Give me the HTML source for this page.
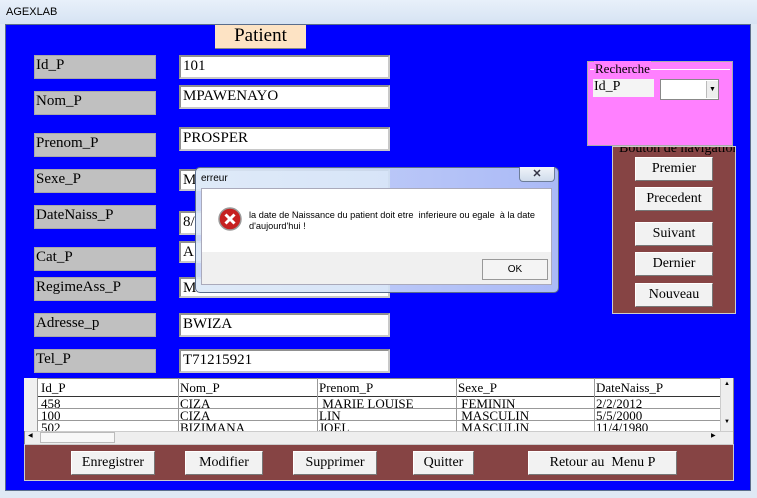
<!DOCTYPE html><html><head><style>
body{margin:0;width:757px;height:498px;overflow:hidden;background:#dfe9f5;font-family:"Liberation Serif",serif;position:relative}
.a{position:absolute;box-sizing:border-box}
.lab{background:#c0c0c0;border:1px solid #a8a8a8;font-size:15px;padding:0 0 0 1px;line-height:18px;width:122px;height:24px;left:34px}
.inp{background:#fff;border:2px solid #c8c8c8;border-top-color:#909090;border-left-color:#909090;font-size:15px;padding:0 2px;line-height:18px;width:211px;height:24px;left:179px}
.btn{background:#f2f2f2;border:1px solid #fff;border-right-color:#777;border-bottom-color:#777;font-size:14px;text-align:center;line-height:22px;height:24px}
.cell{position:absolute;font-size:13px;line-height:12px;overflow:hidden;white-space:nowrap}
</style></head><body>
<div class="a" style="left:0;top:0;width:757px;height:24px;background:linear-gradient(#e8f0fa,#d6e3f3)"></div>
<div class="a" style="left:6px;top:6px;font:11px 'Liberation Sans',sans-serif">AGEXLAB</div>
<div class="a" style="left:5px;top:24px;width:746px;height:467px;background:#0000ff;border:1px solid #5a6d8c"></div>
<div class="a" style="left:215px;top:25px;width:91px;height:24px;background:#fde3c4;font-size:19px;text-align:center;line-height:22px;border-bottom:1px solid #888">Patient</div>

<div class="a lab" style="top:55px">Id_P</div>
<div class="a lab" style="top:91px">Nom_P</div>
<div class="a lab" style="top:133px">Prenom_P</div>
<div class="a lab" style="top:169px">Sexe_P</div>
<div class="a lab" style="top:205px">DateNaiss_P</div>
<div class="a lab" style="top:247px">Cat_P</div>
<div class="a lab" style="top:277px">RegimeAss_P</div>
<div class="a lab" style="top:313px">Adresse_p</div>
<div class="a lab" style="top:349px">Tel_P</div>

<div class="a inp" style="top:55px">101</div>
<div class="a inp" style="top:85px">MPAWENAYO</div>
<div class="a inp" style="top:127px">PROSPER</div>
<div class="a inp" style="top:169px;height:22px">M</div>
<div class="a inp" style="top:211px">8/</div>
<div class="a inp" style="top:241px;height:22px">A</div>
<div class="a inp" style="top:277px;height:21px">M</div>
<div class="a inp" style="top:313px">BWIZA</div>
<div class="a inp" style="top:349px">T71215921</div>

<div class="a" style="left:587px;top:61px;width:146px;height:85px;background:#ff80ff;border:1px solid #aaa"></div>
<div class="a" style="left:590px;top:69px;width:140px;height:1px;background:#fff"></div>
<div class="a" style="left:594px;top:61px;background:#ff80ff;font-size:13px;padding:0 1px;line-height:15px">Recherche</div>
<div class="a" style="left:593px;top:79px;width:61px;height:18px;background:#f4f4f4;font-size:14px;line-height:16px;padding-left:1px">Id_P</div>
<div class="a" style="left:660px;top:79px;width:59px;height:21px;background:#fff;border:1px solid #888"></div>
<div class="a" style="left:706px;top:81px;width:12px;height:17px;background:#eee;border-left:1px solid #bbb;font-size:7px;text-align:center;line-height:17px">▼</div>

<div class="a" style="left:612px;top:146px;width:124px;height:168px;background:#864444;border:1px solid #ccc;overflow:hidden"><div style="font-size:14px;line-height:8px;margin:-2px 0 0 6px;white-space:nowrap">Bouton de navigation</div></div>
<div class="a btn" style="left:635px;top:157px;width:78px">Premier</div>
<div class="a btn" style="left:635px;top:187px;width:78px">Precedent</div>
<div class="a btn" style="left:635px;top:222px;width:78px">Suivant</div>
<div class="a btn" style="left:635px;top:252px;width:78px">Dernier</div>
<div class="a btn" style="left:635px;top:283px;width:78px">Nouveau</div>

<div class="a" style="left:24px;top:378px;width:710px;height:67px;background:#fff;border:1px solid #888"></div>
<div class="a" style="left:24px;top:378px;width:14px;height:53px;background:#f0f0f0;border-right:1px solid #999"></div>
<div class="a" style="left:38px;top:396px;width:682px;height:1px;background:#333"></div>
<div class="a" style="left:38px;top:408px;width:682px;height:1px;background:#999"></div>
<div class="a" style="left:38px;top:420px;width:682px;height:1px;background:#999"></div>
<div class="a" style="left:178px;top:378px;width:1px;height:53px;background:#999"></div>
<div class="a" style="left:317px;top:378px;width:1px;height:53px;background:#999"></div>
<div class="a" style="left:456px;top:378px;width:1px;height:53px;background:#999"></div>
<div class="a" style="left:594px;top:378px;width:1px;height:53px;background:#999"></div>
<div class="cell" style="left:41px;top:382px">Id_P</div><div class="cell" style="left:180px;top:382px">Nom_P</div><div class="cell" style="left:319px;top:382px">Prenom_P</div><div class="cell" style="left:458px;top:382px">Sexe_P</div><div class="cell" style="left:596px;top:382px">DateNaiss_P</div>
<div class="cell" style="left:41px;top:398px">458</div><div class="cell" style="left:180px;top:398px">CIZA</div><div class="cell" style="left:319px;top:398px">&nbsp;MARIE LOUISE</div><div class="cell" style="left:458px;top:398px">&nbsp;FEMININ</div><div class="cell" style="left:596px;top:398px">2/2/2012</div>
<div class="cell" style="left:41px;top:410px">100</div><div class="cell" style="left:180px;top:410px">CIZA</div><div class="cell" style="left:319px;top:410px">LIN</div><div class="cell" style="left:458px;top:410px">&nbsp;MASCULIN</div><div class="cell" style="left:596px;top:410px">5/5/2000</div>
<div class="cell" style="left:41px;top:422px;height:9px">502</div><div class="cell" style="left:180px;top:422px;height:9px">BIZIMANA</div><div class="cell" style="left:319px;top:422px;height:9px">JOEL</div><div class="cell" style="left:458px;top:422px;height:9px">&nbsp;MASCULIN</div><div class="cell" style="left:596px;top:422px;height:9px">11/4/1980</div>
<div class="a" style="left:720px;top:378px;width:13px;height:53px;background:#eee;border-left:1px solid #ccc;font-size:6px;text-align:center"><div style="line-height:12px">▲</div><div style="margin-top:29px">▼</div></div>
<div class="a" style="left:25px;top:431px;width:708px;height:13px;background:#eee;border-top:1px solid #ccc"></div>
<div class="a" style="left:40px;top:432px;width:75px;height:11px;background:#f8f8f8;border:1px solid #bbb"></div>
<div class="a" style="left:28px;top:432px;font-size:6px">◀</div><div class="a" style="left:711px;top:432px;font-size:6px">▶</div>

<div class="a" style="left:24px;top:444px;width:710px;height:37px;background:#864444;border:1px solid #ccc"></div>
<div class="a btn" style="left:71px;top:451px;width:84px">Enregistrer</div>
<div class="a btn" style="left:185px;top:451px;width:78px">Modifier</div>
<div class="a btn" style="left:293px;top:451px;width:84px">Supprimer</div>
<div class="a btn" style="left:413px;top:451px;width:61px">Quitter</div>
<div class="a btn" style="left:528px;top:451px;width:149px">Retour au &nbsp;Menu P</div>

<div class="a" style="left:195px;top:167px;width:364px;height:126px;background:linear-gradient(90deg,rgba(220,232,248,.92),rgba(200,218,245,.85));border:1px solid #5a6d8c;border-radius:5px"></div>
<div class="a" style="left:201px;top:173px;font:10px 'Liberation Sans',sans-serif">erreur</div>
<div class="a" style="left:519px;top:167px;width:36px;height:15px;border:1px solid #6d7d99;border-top:none;border-radius:0 0 4px 4px;background:linear-gradient(#f0f4fa,#d0dcec);text-align:center;font:bold 11px 'Liberation Sans',sans-serif;line-height:14px;color:#334">✕</div>
<div class="a" style="left:201px;top:188px;width:351px;height:97px;background:#f0f0f0;border:1px solid #aab"></div>
<div class="a" style="left:202px;top:189px;width:349px;height:63px;background:#fff"></div>
<svg class="a" style="left:218px;top:207px" width="24" height="24" viewBox="0 0 24 24"><circle cx="12" cy="12" r="11" fill="#c62020" stroke="#9a9a9a" stroke-width="1.5"/><path d="M7.5 7.5L16.5 16.5M16.5 7.5L7.5 16.5" stroke="#fff" stroke-width="3"/></svg>
<div class="a" style="left:249px;top:210px;font:9.2px 'Liberation Sans',sans-serif;line-height:11px;white-space:nowrap">la date de Naissance du patient doit etre &nbsp;inferieure ou egale &nbsp;à la date<br>d'aujourd'hui !</div>
<div class="a" style="left:482px;top:259px;width:66px;height:21px;background:#f4f4f4;border:1px solid #999;font:10px 'Liberation Sans',sans-serif;text-align:center;line-height:19px">OK</div>
</body></html>
